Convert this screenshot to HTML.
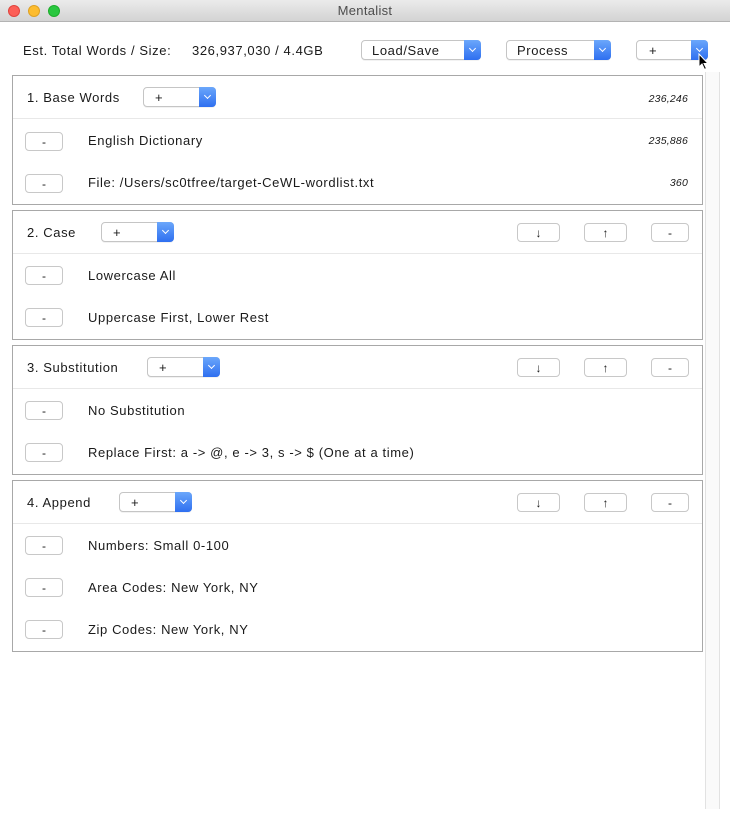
<!DOCTYPE html>
<html><head><style>
*{margin:0;padding:0;box-sizing:border-box}
body{width:730px;height:820px;background:#fff;font-family:"Liberation Sans",Arial,sans-serif;font-size:13px;letter-spacing:0.6px;color:#1a1a1a;position:relative;overflow:hidden}
.a{position:absolute}
.title{left:0;top:0;width:730px;height:22px;background:linear-gradient(#ebebeb,#d3d3d3);border-bottom:1px solid #b3b3b3;text-align:center;line-height:21px;color:#4d4d4d;font-size:13px;letter-spacing:0.3px}
.dot{top:5px;width:12px;height:12px;border-radius:50%}
.pop{height:20px;border:1px solid #c5c5c5;border-radius:4px;background:#fff;box-shadow:0 1px 0 rgba(0,0,0,.05)}
.pop span{position:absolute;left:10px;top:2px}
.pop i{position:absolute;right:-1px;top:-1px;width:17px;height:20px;background:linear-gradient(#6ba7fb,#2e6ff0);border-radius:0 4px 4px 0}
.pop i:after{content:"";position:absolute;left:6px;top:6px;width:4px;height:4px;border-right:1.3px solid #fff;border-bottom:1.3px solid #fff;transform:rotate(45deg)}
.btn{height:19px;border:1px solid #c8c8c8;border-radius:4px;background:#fff;text-align:center;line-height:18px;font-size:12px;letter-spacing:0}
.sec{left:12px;width:691px;border:1px solid #a8a8a8}
.hd{left:0;top:0;width:689px;height:43px;border-bottom:1px solid #e8e8e8}
.num{font-style:italic;font-size:10.5px;right:14px;letter-spacing:0.2px}
.track{left:705px;top:72px;width:15px;height:737px;border-left:1px solid #e2e2e2;border-right:1px solid #e2e2e2;background:#fafafa}
</style></head><body>
<div class="a title">Mentalist</div>
<div class="a dot" style="left:8px;background:#fc5f57;border:1px solid #e0443e"></div>
<div class="a dot" style="left:28px;background:#fdbc2e;border:1px solid #dea123"></div>
<div class="a dot" style="left:48px;background:#29c73f;border:1px solid #1dad2b"></div>

<div class="a" style="left:23px;top:43px">Est. Total Words / Size:</div>
<div class="a" style="left:192px;top:43px">326,937,030 / 4.4GB</div>
<div class="a pop" style="left:361px;top:40px;width:120px"><span>Load/Save</span><i></i></div>
<div class="a pop" style="left:506px;top:40px;width:105px"><span>Process</span><i></i></div>
<div class="a pop" style="left:636px;top:40px;width:72px"><span style="left:12px">+</span><i></i></div>
<svg class="a" style="left:698px;top:53px" width="12" height="18" viewBox="0 0 12 18"><path d="M1 1 L1 14 L4 11 L6.5 16.5 L8.5 15.5 L6 10.5 L10 10.5 Z" fill="#000" stroke="#fff" stroke-width="1"/></svg>

<div class="a track"></div>

<div class="a sec" style="top:75px;height:130px">
 <div class="a hd"></div>
 <div class="a" style="left:14px;top:14px">1. Base Words</div>
 <div class="a pop" style="left:130px;top:11px;width:73px"><span style="left:11px">+</span><i></i></div>
 <div class="a num" style="top:17px">236,246</div>
 <div class="a btn" style="left:12px;top:56px;width:38px">-</div>
 <div class="a" style="left:75px;top:57px">English Dictionary</div>
 <div class="a num" style="top:59px">235,886</div>
 <div class="a btn" style="left:12px;top:98px;width:38px">-</div>
 <div class="a" style="left:75px;top:99px">File: /Users/sc0tfree/target-CeWL-wordlist.txt</div>
 <div class="a num" style="top:101px">360</div>
</div>

<div class="a sec" style="top:210px;height:130px">
 <div class="a hd"></div>
 <div class="a" style="left:14px;top:14px">2. Case</div>
 <div class="a pop" style="left:88px;top:11px;width:73px"><span style="left:11px">+</span><i></i></div>
 <div class="a btn" style="left:504px;top:12px;width:43px">↓</div>
 <div class="a btn" style="left:571px;top:12px;width:43px">↑</div>
 <div class="a btn" style="left:638px;top:12px;width:38px">-</div>
 <div class="a btn" style="left:12px;top:55px;width:38px">-</div>
 <div class="a" style="left:75px;top:57px">Lowercase All</div>
 <div class="a btn" style="left:12px;top:97px;width:38px">-</div>
 <div class="a" style="left:75px;top:99px">Uppercase First, Lower Rest</div>
</div>

<div class="a sec" style="top:345px;height:130px">
 <div class="a hd"></div>
 <div class="a" style="left:14px;top:14px">3. Substitution</div>
 <div class="a pop" style="left:134px;top:11px;width:73px"><span style="left:11px">+</span><i></i></div>
 <div class="a btn" style="left:504px;top:12px;width:43px">↓</div>
 <div class="a btn" style="left:571px;top:12px;width:43px">↑</div>
 <div class="a btn" style="left:638px;top:12px;width:38px">-</div>
 <div class="a btn" style="left:12px;top:55px;width:38px">-</div>
 <div class="a" style="left:75px;top:57px">No Substitution</div>
 <div class="a btn" style="left:12px;top:97px;width:38px">-</div>
 <div class="a" style="left:75px;top:99px">Replace First: a -&gt; @, e -&gt; 3, s -&gt; $ (One at a time)</div>
</div>

<div class="a sec" style="top:480px;height:172px">
 <div class="a hd"></div>
 <div class="a" style="left:14px;top:14px">4. Append</div>
 <div class="a pop" style="left:106px;top:11px;width:73px"><span style="left:11px">+</span><i></i></div>
 <div class="a btn" style="left:504px;top:12px;width:43px">↓</div>
 <div class="a btn" style="left:571px;top:12px;width:43px">↑</div>
 <div class="a btn" style="left:638px;top:12px;width:38px">-</div>
 <div class="a btn" style="left:12px;top:55px;width:38px">-</div>
 <div class="a" style="left:75px;top:57px">Numbers: Small 0-100</div>
 <div class="a btn" style="left:12px;top:97px;width:38px">-</div>
 <div class="a" style="left:75px;top:99px">Area Codes: New York, NY</div>
 <div class="a btn" style="left:12px;top:139px;width:38px">-</div>
 <div class="a" style="left:75px;top:141px">Zip Codes: New York, NY</div>
</div>
</body></html>
